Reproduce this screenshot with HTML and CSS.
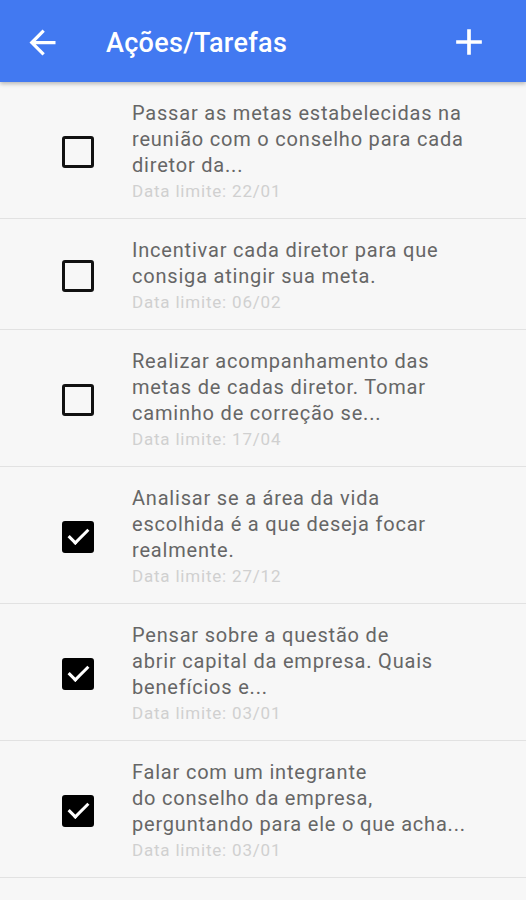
FILE: index.html
```html
<!DOCTYPE html>
<html lang="pt-BR">
<head>
    <meta charset="UTF-8">
    <meta name="viewport" content="width=device-width, initial-scale=1.0">
    <title>Ações/Tarefas</title>
    <link rel="stylesheet" href="styles.css">
</head>
<body>
    <header class="topbar">
        <button class="icon-btn back" aria-label="Voltar">
            <svg width="39" height="39" viewBox="0 0 24 24"><path d="M20 11H7.83l5.59-5.59L12 4l-8 8 8 8 1.41-1.41L7.83 13H20v-2z" fill="#fff"/></svg>
        </button>
        <h1 class="title">Ações/Tarefas</h1>
        <button class="icon-btn add" aria-label="Adicionar">
            <svg width="44" height="44" viewBox="0 0 24 24"><path d="M19 13h-6v6h-2v-6H5v-2h6V5h2v6h6v2z" fill="#fff"/></svg>
        </button>
    </header>

    <ul class="tasks">
        <!-- pendentes -->
        <li class="task">
            <span class="check"></span>
            <div class="task-body">
                <p class="task-text">Passar as metas estabelecidas na<br>reunião com o conselho para cada<br>diretor da...</p>
                <p class="task-date">Data limite: 22/01</p>
            </div>
        </li>
        <li class="task">
            <span class="check"></span>
            <div class="task-body">
                <p class="task-text">Incentivar cada diretor para que<br>consiga atingir sua meta.</p>
                <p class="task-date">Data limite: 06/02</p>
            </div>
        </li>
        <li class="task">
            <span class="check"></span>
            <div class="task-body">
                <p class="task-text">Realizar acompanhamento das<br>metas de cadas diretor. Tomar<br>caminho de correção se...</p>
                <p class="task-date">Data limite: 17/04</p>
            </div>
        </li>
        <!-- concluidas -->
        <li class="task">
            <span class="check done"></span>
            <div class="task-body">
                <p class="task-text">Analisar se a área da vida<br>escolhida é a que deseja focar<br>realmente.</p>
                <p class="task-date">Data limite: 27/12</p>
            </div>
        </li>
        <li class="task">
            <span class="check done"></span>
            <div class="task-body">
                <p class="task-text">Pensar sobre a questão de<br>abrir capital da empresa. Quais<br>benefícios e...</p>
                <p class="task-date">Data limite: 03/01</p>
            </div>
        </li>
        <li class="task">
            <span class="check done"></span>
            <div class="task-body">
                <p class="task-text">Falar com um integrante<br>do conselho da empresa,<br>perguntando para ele o que acha...</p>
                <p class="task-date">Data limite: 03/01</p>
            </div>
        </li>
        <li class="task">
            <span class="check done"></span>
            <div class="task-body">
                <p class="task-text">Marcar uma reunião mensal com os<br>diretores para avaliar os<br>resultados...</p>
                <p class="task-date">Data limite: 10/01</p>
            </div>
        </li>
    </ul>
</body>
</html>
```

FILE: styles.css
```css
body {
    margin: 0;
    padding: 0;
    height: 900px;
    overflow: hidden;
    font-family: Roboto, "Noto Sans", Arial, sans-serif;
    background-color: #f7f7f7;
}
.topbar {
    position: relative;
    z-index: 1;
    height: 82px;
    background-color: #4279f1;
    display: flex;
    align-items: center;
    box-shadow: 0 2px 4px rgba(0, 0, 0, 0.25);
}
.icon-btn {
    background: none;
    border: none;
    padding: 0;
    display: flex;
    cursor: pointer;
}
.back {
    margin-left: 23px;
    margin-top: 2px;
}
.add {
    margin-left: auto;
    margin-right: 35px;
    margin-top: 2px;
}
.title {
    margin: 3px 0 0 44px;
    color: #fff;
    font-size: 27px;
    font-weight: 500;
    letter-spacing: 0.3px;
}
.tasks {
    list-style-type: none;
    margin: 0;
    padding: 0;
}
.task {
    display: flex;
    align-items: center;
    border-bottom: 1px solid #e2e2e2;
    padding: 18px 20px 14px 62px;
}
.check {
    flex: none;
    width: 26px;
    height: 26px;
    border: 3px solid #111;
    border-radius: 3px;
    margin-right: 38px;
}
.check.done {
    background-color: #000;
    border-color: #000;
    position: relative;
}
.check.done::after {
    content: "";
    position: absolute;
    left: 8px;
    top: 0;
    width: 8px;
    height: 17px;
    border: solid #fff;
    border-width: 0 3px 3px 0;
    transform: rotate(45deg);
}
.task-body p {
    margin: 0;
}
.task-text {
    color: #666;
    font-size: 20px;
    line-height: 26px;
    letter-spacing: 0.8px;
}
.task-date {
    color: #d0d0d0;
    font-size: 17px;
    line-height: 26px;
    letter-spacing: 0.8px;
}
```
